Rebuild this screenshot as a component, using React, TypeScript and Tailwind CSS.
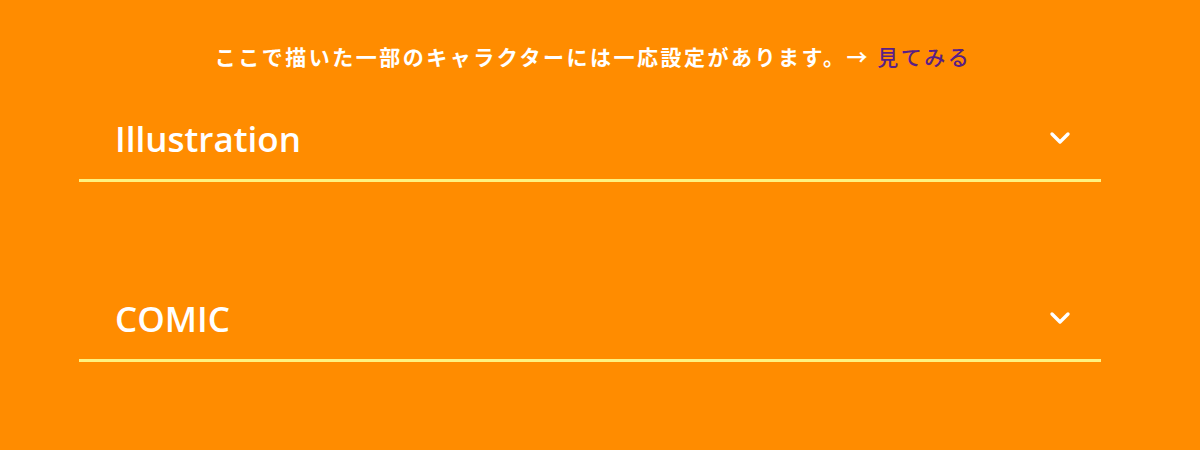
const sections = ['Illustration', 'COMIC'];

function Chevron() {
  return (
    <svg width="22" height="14" viewBox="0 0 22 14" fill="none" className="text-white">
      <polyline
        points="3,3 11,11 19,3"
        stroke="currentColor"
        strokeWidth="3.4"
        strokeLinecap="round"
        strokeLinejoin="round"
      />
    </svg>
  );
}

function SectionRow({ title }: { title: string }) {
  return (
    <div className="border-b-[3px] border-[#fff27f]">
      <button className="flex h-[76px] w-full items-center justify-between pb-[6px] pl-[36px] pr-[30px] text-left">
        <span
          className="text-[35px] font-semibold leading-none text-white"
          style={{ fontFamily: '"Open Sans", sans-serif' }}
        >
          {title}
        </span>
        <Chevron />
      </button>
    </div>
  );
}

export default function App() {
  return (
    <div className="h-[450px] w-full overflow-hidden bg-[#ff8c00]">
      {/* Intro line with link */}
      <p
        className="pr-[14px] pt-[42px] text-center text-[21px] font-bold leading-[28px] tracking-[2.5px] text-white"
        style={{ fontFamily: '"Noto Sans CJK JP", sans-serif' }}
      >
        ここで描いた一部のキャラクターには一応設定があります。→ <a href="#" className="font-medium text-[#5a1e86]">見てみる</a>
      </p>

      <div className="mx-[79px] mt-[33px] flex w-[1022px] flex-col gap-[101px]">
        {sections.map((s) => (
          <SectionRow key={s} title={s} />
        ))}
      </div>
    </div>
  );
}
